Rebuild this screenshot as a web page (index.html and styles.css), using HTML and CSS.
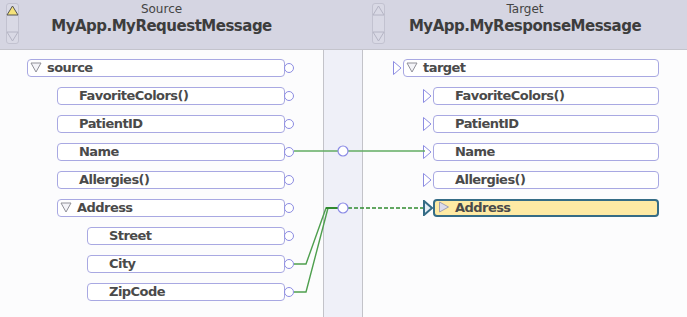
FILE: index.html
```html
<!DOCTYPE html>
<html lang="en">
<head>
<meta charset="UTF-8">
<title>Message Mapper</title>
<link rel="stylesheet" href="styles.css">
</head>
<body>
<div class="mapper">
  <div class="header">
    <div class="head-side">
      <div class="scroller">
        <svg class="arrow" width="13" height="13" viewBox="0 0 13 13"><polygon points="6.5,2 12,11 1,11" fill="#f5e27a" stroke="#555" stroke-width="1"/></svg>
        <svg class="arrow" width="13" height="13" viewBox="0 0 13 13"><polygon points="1,2 12,2 6.5,11" fill="none" stroke="#b4b4c4" stroke-width="1"/></svg>
      </div>
      <div class="titles">
        <div class="caption">Source</div>
        <div class="title">MyApp.MyRequestMessage</div>
      </div>
    </div>
    <div class="head-gap"></div>
    <div class="head-side head-right">
      <div class="scroller">
        <svg class="arrow" width="13" height="13" viewBox="0 0 13 13"><polygon points="6.5,2 12,11 1,11" fill="none" stroke="#b4b4c4" stroke-width="1"/></svg>
        <svg class="arrow" width="13" height="13" viewBox="0 0 13 13"><polygon points="1,2 12,2 6.5,11" fill="none" stroke="#b4b4c4" stroke-width="1"/></svg>
      </div>
      <div class="titles">
        <div class="caption">Target</div>
        <div class="title">MyApp.MyResponseMessage</div>
      </div>
    </div>
  </div>

  <div class="content">
    <div class="side source-side">
      <div class="row lvl0"><div class="node"><span class="twisty down"></span>source</div><span class="port"></span></div>
      <div class="row lvl1"><div class="node leaf">FavoriteColors()</div><span class="port"></span></div>
      <div class="row lvl1"><div class="node leaf">PatientID</div><span class="port"></span></div>
      <div class="row lvl1"><div class="node leaf">Name</div><span class="port"></span></div>
      <div class="row lvl1"><div class="node leaf">Allergies()</div><span class="port"></span></div>
      <div class="row lvl1"><div class="node"><span class="twisty down"></span>Address</div><span class="port"></span></div>
      <div class="row lvl2"><div class="node leaf">Street</div><span class="port"></span></div>
      <div class="row lvl2"><div class="node leaf">City</div><span class="port"></span></div>
      <div class="row lvl2"><div class="node leaf">ZipCode</div><span class="port"></span></div>
    </div>

    <div class="gutter"></div>

    <div class="side target-side">
      <div class="row lvl0"><span class="inlet"></span><div class="node"><span class="twisty down"></span>target</div></div>
      <div class="row lvl1"><span class="inlet"></span><div class="node leaf">FavoriteColors()</div></div>
      <div class="row lvl1"><span class="inlet"></span><div class="node leaf">PatientID</div></div>
      <div class="row lvl1"><span class="inlet"></span><div class="node leaf">Name</div></div>
      <div class="row lvl1"><span class="inlet"></span><div class="node leaf">Allergies()</div></div>
      <div class="row lvl1"><span class="inlet active"></span><div class="node selected"><span class="twisty right"></span>Address</div></div>
    </div>

    <!-- links between source and target ports -->
    <svg class="links" width="687" height="267" viewBox="0 50 687 267">
      <line x1="294" y1="151" x2="338" y2="151" stroke="#62ad62" stroke-width="1.6"/>
      <line x1="348" y1="151" x2="425" y2="151" stroke="#62ad62" stroke-width="1.6"/>
      <circle cx="343" cy="151" r="5" fill="#fff" stroke="#8a8ae6" stroke-width="1.2"/>

      <polyline points="294,264 306,264 326,208 338,208" fill="none" stroke="#4e9f4e" stroke-width="1.4"/>
      <polyline points="294,292 306,292 328,208 338,208" fill="none" stroke="#4e9f4e" stroke-width="1.4"/>
      <line x1="326" y1="208" x2="338" y2="208" stroke="#2f8a2f" stroke-width="2"/>
      <line x1="348" y1="208" x2="423" y2="208" stroke="#2f8a2f" stroke-width="1.6" stroke-dasharray="4 2"/>
      <circle cx="343" cy="208" r="5" fill="#fff" stroke="#8a8ae6" stroke-width="1.2"/>
    </svg>
  </div>
</div>
</body>
</html>
```

FILE: styles.css
```css
body {
  margin: 0;
  background-color: #fcfcfd;
  font-family: "DejaVu Sans", Verdana, sans-serif;
}

.mapper {
  position: relative;
  width: 687px;
  height: 317px;
  overflow: hidden;
}

.header {
  display: grid;
  grid-template-columns: 323px 40px 1fr;
  height: 50px;
  background-color: #d5d5e2;
  border-bottom: 1px solid #c4c4cc;
  box-sizing: border-box;
}

.head-side {
  position: relative;
  display: flex;
  justify-content: center;
}

.head-right {
  grid-column: 2 / 4;
  padding-left: 40px;
}

.head-gap {
  display: none;
}

.scroller {
  position: absolute;
  left: 6px;
  top: 3px;
  width: 13px;
  height: 41px;
  display: flex;
  flex-direction: column;
  justify-content: space-between;
  border: 1px solid #c2c2d0;
  border-radius: 3px;
  background-color: #d9d9e5;
  box-sizing: border-box;
}

.head-right .scroller {
  left: 49px;
}

.arrow {
  display: block;
  margin-left: -1px;
}

.titles {
  text-align: center;
  color: #444;
}

.caption {
  font-size: 12px;
  margin-top: 2px;
  line-height: 14px;
}

.title {
  font-size: 15px;
  font-weight: bold;
  letter-spacing: -0.5px;
  line-height: 20px;
  color: #3d3d3d;
}

.content {
  display: grid;
  grid-template-columns: 323px 40px 1fr;
  height: 267px;
}

.side {
  display: flex;
  flex-direction: column;
  gap: 10px;
  padding-top: 9px;
}

.source-side {
  padding-right: 29px;
}

.target-side {
  padding-right: 28px;
}

.gutter {
  background-color: #eff0f8;
  border-left: 1px solid #c3c3c9;
  border-right: 1px solid #c3c3c9;
}

.row {
  display: flex;
  align-items: center;
  height: 18px;
}

.source-side .lvl0 { padding-left: 27px; }
.source-side .lvl1 { padding-left: 57px; }
.source-side .lvl2 { padding-left: 87px; }

.target-side .lvl0 { padding-left: 30px; }
.target-side .lvl1 { padding-left: 60px; }

.node {
  flex: 1;
  display: flex;
  align-items: center;
  height: 18px;
  box-sizing: border-box;
  border: 1px solid #a8a8e2;
  border-radius: 4px;
  background-color: #fff;
  font-size: 13px;
  font-weight: bold;
  letter-spacing: -0.55px;
  line-height: 15px;
  color: #4a4a4a;
  white-space: nowrap;
  padding-left: 2px;
  padding-bottom: 2px;
}

.node.leaf {
  padding-left: 21px;
}

.node.selected {
  background-color: #feeaa4;
  border: 2px solid #356c86;
  padding-left: 3px;
}

.twisty {
  width: 12px;
  height: 12px;
  margin-right: 5px;
  flex: none;
}

.twisty.down {
  background: url("data:image/svg+xml;utf8,<svg xmlns='http://www.w3.org/2000/svg' width='12' height='12'><polygon points='1,2 11,2 6,11' fill='%23f4f4f8' stroke='%23909098'/></svg>") no-repeat;
}

.twisty.right {
  background: url("data:image/svg+xml;utf8,<svg xmlns='http://www.w3.org/2000/svg' width='12' height='12'><polygon points='1.5,1 10.5,6 1.5,11' fill='%23dcdcec' stroke='%23a0a0b4'/></svg>") no-repeat;
}

.port {
  width: 10px;
  height: 10px;
  box-sizing: border-box;
  border: 1px solid #8c8ce2;
  border-radius: 50%;
  background-color: #fff;
  margin-left: -1px;
  flex: none;
}

.inlet {
  width: 10px;
  height: 14px;
  flex: none;
  background: url("data:image/svg+xml;utf8,<svg xmlns='http://www.w3.org/2000/svg' width='10' height='14'><polygon points='0.5,0.5 8,7 0.5,13.5' fill='%23fff' stroke='%238c8ce2'/></svg>") no-repeat;
}

.inlet.active {
  background: url("data:image/svg+xml;utf8,<svg xmlns='http://www.w3.org/2000/svg' width='10' height='16'><polygon points='1,1 9,8 1,15' fill='%23e6eef6' stroke='%23356c86' stroke-width='2'/></svg>") no-repeat;
  height: 16px;
}

.links {
  position: absolute;
  left: 0;
  top: 50px;
  pointer-events: none;
}
```
